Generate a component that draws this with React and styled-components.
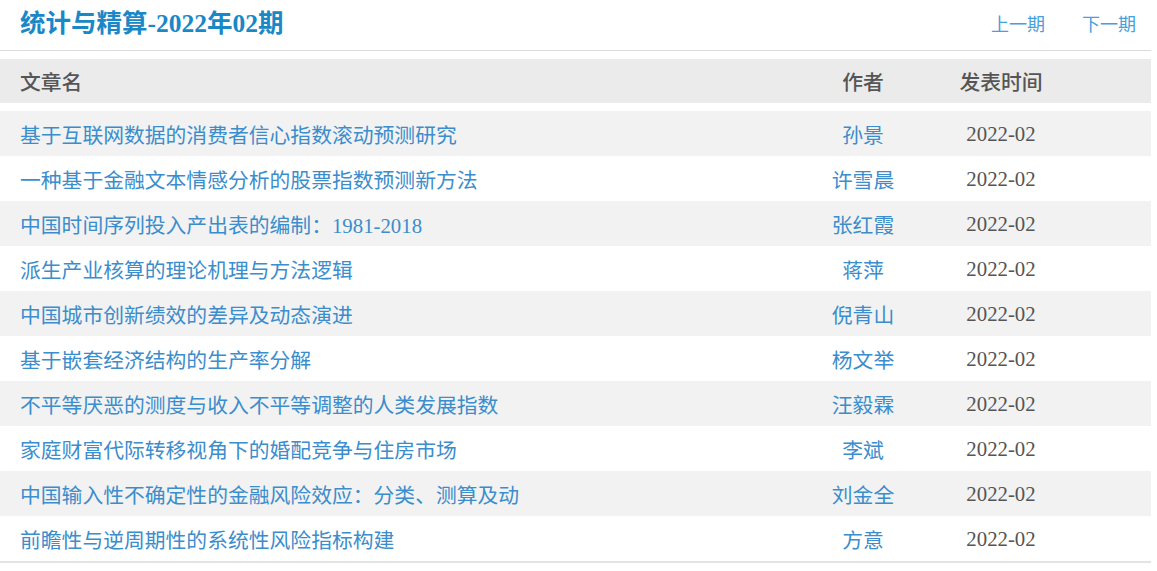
import React from 'react'
import styled, { createGlobalStyle } from 'styled-components';

const GlobalStyle = createGlobalStyle`
body{
    margin:0;
    background:#fff;
    font-family:"Liberation Serif", "Noto Sans CJK SC", serif;
}
`

const articles = [
    { title: '基于互联网数据的消费者信心指数滚动预测研究', author: '孙景', date: '2022-02' },
    { title: '一种基于金融文本情感分析的股票指数预测新方法', author: '许雪晨', date: '2022-02' },
    { title: '中国时间序列投入产出表的编制：1981-2018', author: '张红霞', date: '2022-02' },
    { title: '派生产业核算的理论机理与方法逻辑', author: '蒋萍', date: '2022-02' },
    { title: '中国城市创新绩效的差异及动态演进', author: '倪青山', date: '2022-02' },
    { title: '基于嵌套经济结构的生产率分解', author: '杨文举', date: '2022-02' },
    { title: '不平等厌恶的测度与收入不平等调整的人类发展指数', author: '汪毅霖', date: '2022-02' },
    { title: '家庭财富代际转移视角下的婚配竞争与住房市场', author: '李斌', date: '2022-02' },
    { title: '中国输入性不确定性的金融风险效应：分类、测算及动', author: '刘金全', date: '2022-02' },
    { title: '前瞻性与逆周期性的系统性风险指标构建', author: '方意', date: '2022-02' },
]

function App() {
    return (
        <Page>
            <GlobalStyle />
            <TopBar>
                <Title>统计与精算-2022年02期</Title>
                <Nav>
                    <NavLink href="#">上一期</NavLink>
                    <NavLink href="#">下一期</NavLink>
                </Nav>
            </TopBar>
            <Table>
                <HeadRow>
                    <HeadCell>文章名</HeadCell>
                    <HeadCell center>作者</HeadCell>
                    <HeadCell center>发表时间</HeadCell>
                </HeadRow>
                <Body>
                    {articles.map((a, i) => (
                        <Row key={i} striped={i % 2 === 0}>
                            <Cell link>{a.title}</Cell>
                            <Cell link center>{a.author}</Cell>
                            <Cell center>{a.date}</Cell>
                        </Row>
                    ))}
                </Body>
            </Table>
        </Page>
    )
}

export default App

const Page = styled.div`
width:1151px;
`
const TopBar = styled.div`
height:50px;
border-bottom:1px solid #dcdcdc;
display:flex;
align-items:center;
justify-content:space-between;
padding:0 15px 0 20px;
`
const Title = styled.h1`
margin:0;
font-size:25.5px;
font-weight:700;
color:#1a87c6;
line-height:1;
margin-top:-3px;
`
const Nav = styled.div`
display:flex;
gap:37px;
`
const NavLink = styled.a`
font-size:18px;
color:#45a0dc;
text-decoration:none;
margin-top:-4px;
`
const Table = styled.div`
margin-top:8px;
border-bottom:2px solid #e3e3e3;
`
const grid = `
display:grid;
grid-template-columns:1fr 130px 146px;
padding:0 77px 0 20px;
align-items:center;
`
const HeadRow = styled.div`
${grid}
height:44px;
background:#ebebeb;
`
const HeadCell = styled.div`
font-size:20.8px;
font-weight:500;
color:#555;
text-align:${p => p.center ? 'center' : 'left'};
`
const Body = styled.div`
margin-top:8px;
`
const Row = styled.div`
${grid}
height:45px;
background:${p => p.striped ? '#f2f2f2' : '#fff'};
`
const Cell = styled.div`
font-size:20.8px;
text-align:${p => p.center ? 'center' : 'left'};
color:${p => p.link ? '#3b8dcc' : '#555'};
white-space:nowrap;
`
